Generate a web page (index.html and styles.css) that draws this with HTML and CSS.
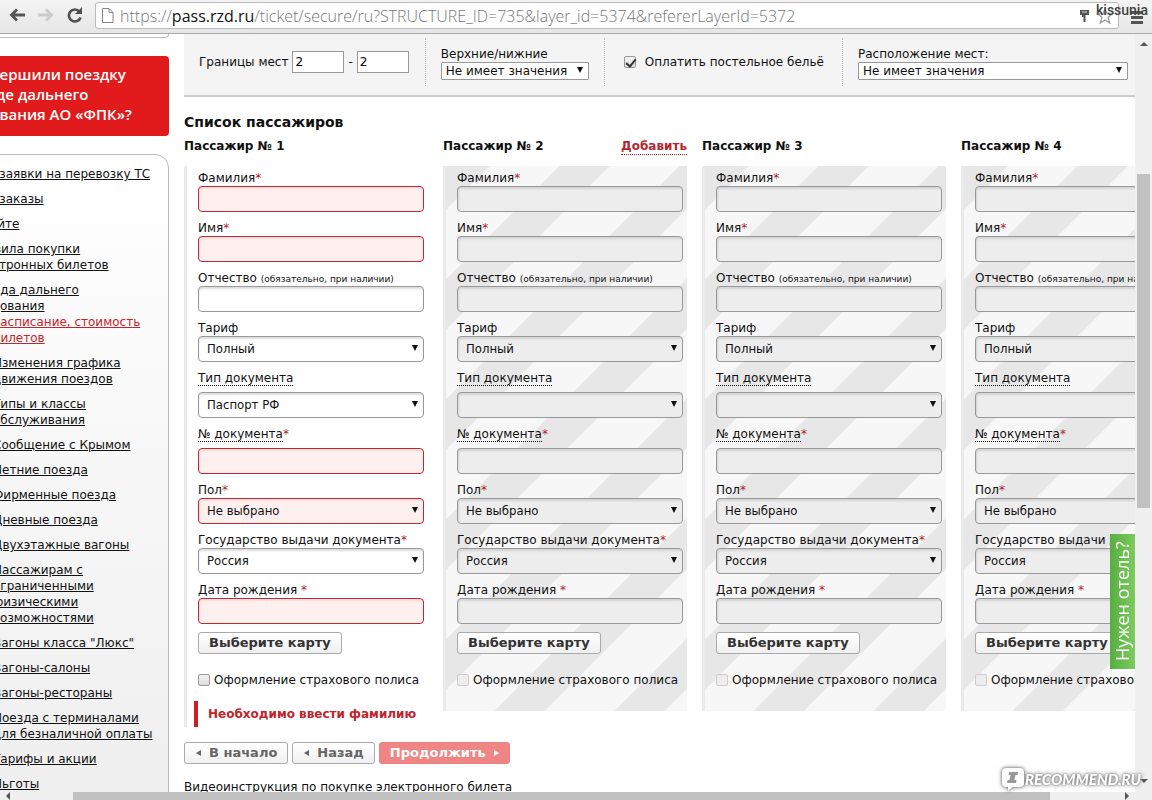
FILE: index.html
```html
<!DOCTYPE html>
<html lang="ru">
<head>
<meta charset="utf-8">
<title>Список пассажиров</title>
<link rel="stylesheet" href="styles.css">
</head>
<body>
<header class="toolbar">
  <button class="tool" type="button" aria-label="Назад"><svg width="18" height="16" viewBox="0 0 18 16"><path d="M17 8H4M9 2.500L3.500 8L9 13.500" fill="none" stroke="#555" stroke-width="2.800"/></svg></button>
  <button class="tool" type="button" aria-label="Вперёд"><svg width="18" height="16" viewBox="0 0 18 16"><path d="M1 8h13M9 2.500L14.500 8L9 13.500" fill="none" stroke="#ccc" stroke-width="2.800"/></svg></button>
  <button class="tool" type="button" aria-label="Обновить"><svg width="18" height="16" viewBox="0 0 18 16"><path d="M13.500 4.500A6 6 0 1 0 14.600 10.500" fill="none" stroke="#505050" stroke-width="2.600"/><path d="M16 0v7H9z" fill="#505050"/></svg></button>
  <div class="address">
    <svg class="doc" width="14" height="18" viewBox="0 0 14 18"><path d="M1.500 1.500h6.500l4 4v10H1.500zM8 1.500v4h4" fill="#fff" stroke="#888"/></svg>
    <div class="url">https://<b>pass.rzd.ru</b>/ticket/secure/ru?STRUCTURE_ID=735&amp;layer_id=5374&amp;refererLayerId=5372</div>
    <svg width="12" height="16" viewBox="0 0 12 16"><path d="M1 2h9v5H1z" fill="#555"/><path d="M3 4h5" stroke="#ddd"/><path d="M5.500 7v7M4 7v2" stroke="#555" stroke-width="2"/></svg>
    <svg class="star" width="18" height="18" viewBox="0 0 18 18"><path d="M9 2l2.100 5H16l-4 3.500 1.800 5.500L9 13l-4.800 3L6 10.500 2 7h4.900z" fill="#fff" stroke="#999" stroke-width="1.200"/></svg>
  </div>
  <button class="menu" type="button" aria-label="Меню"><svg width="14" height="18" viewBox="0 0 14 18"><path d="M1 5.500h12M1 10.500h12M1 15.500h12" stroke="#555" stroke-width="3"/></svg></button>
  <span class="author">kissunia</span>
</header>

<div class="window">
  <div class="viewport">
    <div class="page">
      <aside class="side">
        <div class="stub"></div>
        <a class="banner" href="#"><span>Вы совершили поездку<br>в поезде дальнего<br>&nbsp; следования АО «ФПК»?</span></a>
        <nav class="links">
          <ul>
            <li><a href="#">Мои заявки на перевозку ТС</a></li>
            <li><a href="#">Мои заказы</a></li>
            <li><a href="#">О сайте</a></li>
            <li><a href="#">Правила покупки<br>электронных билетов</a></li>
            <li><a href="#">Поезда дальнего<br>следования</a>
              <ul>
                <li><a class="current" href="#">Расписание, стоимость<br>билетов</a></li>
                <li><a href="#">Изменения графика<br>движения поездов</a></li>
                <li><a href="#">Типы и классы<br>обслуживания</a></li>
                <li><a href="#">Сообщение с Крымом</a></li>
                <li><a href="#">Летние поезда</a></li>
                <li><a href="#">Фирменные поезда</a></li>
                <li><a href="#">Дневные поезда</a></li>
                <li><a href="#">Двухэтажные вагоны</a></li>
                <li><a href="#">Пассажирам с<br>ограниченными<br>физическими<br>возможностями</a></li>
                <li><a href="#">Вагоны класса "Люкс"</a></li>
                <li><a href="#">Вагоны-салоны</a></li>
                <li><a href="#">Вагоны-рестораны</a></li>
                <li><a href="#">Поезда с терминалами<br>для безналичной оплаты</a></li>
                <li><a href="#">Тарифы и акции</a></li>
                <li><a href="#">Льготы</a></li>
              </ul>
            </li>
          </ul>
        </nav>
      </aside>

      <main class="main">
        <section class="filters">
          <div class="filter range">
            <label for="from">Границы мест</label>
            <input id="from" type="text" value="2"><span>-</span><input type="text" value="2" aria-label="Границы мест, до">
          </div>
          <div class="filter stack">
            <label for="level">Верхние/нижние</label>
            <div class="pick small"><select id="level"><option>Не имеет значения</option></select></div>
          </div>
          <div class="filter linen">
            <input id="linen" class="tick" type="checkbox" checked><label for="linen">Оплатить постельное бельё</label>
          </div>
          <div class="filter stack wide">
            <label for="place">Расположение мест:</label>
            <div class="pick small"><select id="place"><option>Не имеет значения</option></select></div>
          </div>
        </section>

        <h1 class="title">Список пассажиров</h1>
        <div class="passengers">
          <section class="passenger">
            <div class="head"><h2>Пассажир № 1</h2></div>
            <div class="card active">
              <div class="field"><label for="s1">Фамилия<i>*</i></label><input class="box bad" id="s1" type="text"></div>
              <div class="field"><label for="n1">Имя<i>*</i></label><input class="box bad" id="n1" type="text"></div>
              <div class="field"><label for="p1">Отчество <small>(обязательно, при наличии)</small></label><input class="box" id="p1" type="text"></div>
              <div class="field"><label for="t1">Тариф</label><div class="pick"><select class="box" id="t1"><option>Полный</option></select></div></div>
              <div class="field hint"><label for="d1"><u>Тип документа</u></label><div class="pick"><select class="box" id="d1"><option>Паспорт РФ</option></select></div></div>
              <div class="field hint"><label for="i1"><u>№ документа</u><i>*</i></label><input class="box bad" id="i1" type="text"></div>
              <div class="field"><label for="g1">Пол<i>*</i></label><div class="pick"><select class="box bad" id="g1"><option>Не выбрано</option></select></div></div>
              <div class="field"><label for="c1">Государство выдачи документа<i>*</i></label><div class="pick"><select class="box" id="c1"><option>Россия</option></select></div></div>
              <div class="field"><label for="b1">Дата рождения <i>*</i></label><input class="box bad" id="b1" type="text"></div>
              <button class="btn" type="button">Выберите карту</button>
              <div class="policy"><input class="tick" id="o1" type="checkbox"><label for="o1">Оформление страхового полиса</label></div>
              <p class="error">Необходимо ввести фамилию</p>
            </div>
          </section>
          <section class="passenger">
            <div class="head"><h2>Пассажир № 2</h2><a class="add" href="#">Добавить</a></div>
            <div class="card">
              <div class="field"><label for="s2">Фамилия<i>*</i></label><input class="box" id="s2" type="text" disabled></div>
              <div class="field"><label for="n2">Имя<i>*</i></label><input class="box" id="n2" type="text" disabled></div>
              <div class="field"><label for="p2">Отчество <small>(обязательно, при наличии)</small></label><input class="box" id="p2" type="text" disabled></div>
              <div class="field"><label for="t2">Тариф</label><div class="pick"><select class="box" id="t2" disabled><option>Полный</option></select></div></div>
              <div class="field hint"><label for="d2"><u>Тип документа</u></label><div class="pick"><select class="box" id="d2" disabled><option></option></select></div></div>
              <div class="field hint"><label for="i2"><u>№ документа</u><i>*</i></label><input class="box" id="i2" type="text" disabled></div>
              <div class="field"><label for="g2">Пол<i>*</i></label><div class="pick"><select class="box" id="g2" disabled><option>Не выбрано</option></select></div></div>
              <div class="field"><label for="c2">Государство выдачи документа<i>*</i></label><div class="pick"><select class="box" id="c2" disabled><option>Россия</option></select></div></div>
              <div class="field"><label for="b2">Дата рождения <i>*</i></label><input class="box" id="b2" type="text" disabled></div>
              <button class="btn" type="button">Выберите карту</button>
              <div class="policy"><input class="tick" id="o2" type="checkbox" disabled><label for="o2">Оформление страхового полиса</label></div>
            </div>
          </section>
          <section class="passenger">
            <div class="head"><h2>Пассажир № 3</h2></div>
            <div class="card">
              <div class="field"><label for="s3">Фамилия<i>*</i></label><input class="box" id="s3" type="text" disabled></div>
              <div class="field"><label for="n3">Имя<i>*</i></label><input class="box" id="n3" type="text" disabled></div>
              <div class="field"><label for="p3">Отчество <small>(обязательно, при наличии)</small></label><input class="box" id="p3" type="text" disabled></div>
              <div class="field"><label for="t3">Тариф</label><div class="pick"><select class="box" id="t3" disabled><option>Полный</option></select></div></div>
              <div class="field hint"><label for="d3"><u>Тип документа</u></label><div class="pick"><select class="box" id="d3" disabled><option></option></select></div></div>
              <div class="field hint"><label for="i3"><u>№ документа</u><i>*</i></label><input class="box" id="i3" type="text" disabled></div>
              <div class="field"><label for="g3">Пол<i>*</i></label><div class="pick"><select class="box" id="g3" disabled><option>Не выбрано</option></select></div></div>
              <div class="field"><label for="c3">Государство выдачи документа<i>*</i></label><div class="pick"><select class="box" id="c3" disabled><option>Россия</option></select></div></div>
              <div class="field"><label for="b3">Дата рождения <i>*</i></label><input class="box" id="b3" type="text" disabled></div>
              <button class="btn" type="button">Выберите карту</button>
              <div class="policy"><input class="tick" id="o3" type="checkbox" disabled><label for="o3">Оформление страхового полиса</label></div>
            </div>
          </section>
          <section class="passenger">
            <div class="head"><h2>Пассажир № 4</h2></div>
            <div class="card">
              <div class="field"><label for="s4">Фамилия<i>*</i></label><input class="box" id="s4" type="text" disabled></div>
              <div class="field"><label for="n4">Имя<i>*</i></label><input class="box" id="n4" type="text" disabled></div>
              <div class="field"><label for="p4">Отчество <small>(обязательно, при наличии)</small></label><input class="box" id="p4" type="text" disabled></div>
              <div class="field"><label for="t4">Тариф</label><div class="pick"><select class="box" id="t4" disabled><option>Полный</option></select></div></div>
              <div class="field hint"><label for="d4"><u>Тип документа</u></label><div class="pick"><select class="box" id="d4" disabled><option></option></select></div></div>
              <div class="field hint"><label for="i4"><u>№ документа</u><i>*</i></label><input class="box" id="i4" type="text" disabled></div>
              <div class="field"><label for="g4">Пол<i>*</i></label><div class="pick"><select class="box" id="g4" disabled><option>Не выбрано</option></select></div></div>
              <div class="field"><label for="c4">Государство выдачи документа<i>*</i></label><div class="pick"><select class="box" id="c4" disabled><option>Россия</option></select></div></div>
              <div class="field"><label for="b4">Дата рождения <i>*</i></label><input class="box" id="b4" type="text" disabled></div>
              <button class="btn" type="button">Выберите карту</button>
              <div class="policy"><input class="tick" id="o4" type="checkbox" disabled><label for="o4">Оформление страхового полиса</label></div>
            </div>
          </section>
        </div>

        <div class="steps">
          <button class="btn step" type="button"><span class="arrow left"></span>В начало</button>
          <button class="btn step" type="button"><span class="arrow left"></span>Назад</button>
          <button class="btn step next" type="button">Продолжить<span class="arrow right"></span></button>
        </div>
        <p class="video">Видеоинструкция по покупке электронного билета</p>
      </main>
    </div>
    <a class="hotel" href="#">Нужен отель?</a>
  </div>
  <div class="vbar"><span class="tip up"></span><span class="vthumb"></span><span class="tip down"></span></div>
</div>
<div class="hbar"><span class="tip back"></span><span class="hthumb"></span><span class="tip forth"></span></div>
<div class="mark">
  <svg width="24" height="26" viewBox="0 0 24 26"><path d="M5 2h14q4 0 4 4v11q0 4-4 4h-7l-5 4v-4H5q-4 0-4-4V6q0-4 4-4z" fill="#fff"/><path d="M8 6h9l-.500 3h-2l-1 5h2l-.500 3H6l.500-3h2l1-5h-2z" fill="#999"/></svg>
  <span>RECOMMEND.RU</span>
</div>
</body>
</html>
```
FILE: styles.css
```css
* { box-sizing: border-box; }

body {
  margin: 0;
  height: 100vh;
  display: flex;
  flex-direction: column;
  overflow: hidden;
  position: relative;
  background: #fff;
  color: #111;
  font: 12px/16px "DejaVu Sans", Verdana, sans-serif;
}

h1, h2, p, ul { margin: 0; padding: 0; }
ul { list-style: none; }
button, input, select { font: inherit; margin: 0; }

/* Browser toolbar */
.toolbar {
  flex: none;
  height: 34px;
  display: flex;
  align-items: flex-start;
  gap: 11px;
  padding: 2px 8px 0;
  background: linear-gradient(#f4f4f4, #e6e6e6);
  border-bottom: 1px solid #aaa;
  position: relative;
}
.tool, .menu {
  flex: none;
  display: flex;
  padding: 5px 0;
  border: 0;
  background: none;
}
.address {
  flex: 1;
  min-width: 0;
  height: 27px;
  display: flex;
  align-items: center;
  gap: 5px;
  padding: 0 4px 0 5px;
  background: #fff;
  border: 1px solid #bbb;
  border-radius: 3px;
}
.address svg { flex: none; }
.url {
  flex: 1;
  overflow: hidden;
  white-space: nowrap;
  color: #777;
  font: 300 16px/24px "Open Sans", "Noto Sans", sans-serif;
}
.url b { color: #111; font-weight: 400; }
.author {
  position: absolute;
  right: 4px;
  top: 2px;
  color: #444;
  font: 500 14px/16px Roboto, sans-serif;
}

/* Scrolled window */
.window { flex: 1; min-height: 0; display: flex; }
.viewport { flex: 1; min-width: 0; overflow: hidden; position: relative; }
.page { display: flex; align-items: flex-start; margin-left: -56px; }

/* Side column */
.side { flex: none; width: 225px; margin-right: 15px; }
.stub {
  height: 4px;
  border: 1px solid #bbb;
  border-top: 0;
  border-radius: 0 0 8px 8px;
}
.banner {
  display: block;
  margin: 18px 0;
  padding: 8px 0 12px 4px;
  background: #e11b1b;
  border-radius: 4px;
  color: #fff;
  text-decoration: none;
  white-space: nowrap;
  font: 600 15px/20px "Open Sans", sans-serif;
}
.links {
  padding: 11px 0 40px 25px;
  border: 1px solid #bbb;
  border-radius: 14px;
  background: linear-gradient(#fff, #eee);
  white-space: nowrap;
}
.links li + li { margin-top: 9px; }
.links ul ul { padding-left: 23px; }
.links a { color: #111; }
.links .current { color: #c8242b; }

/* Filters */
.main { flex: 1; min-width: 0; }
.filters {
  display: flex;
  padding: 4px 7px 9px 0;
  background: #f4f4f4;
  border-bottom: 2px solid #ccc;
}
.filter {
  display: flex;
  align-items: center;
  height: 48px;
  padding: 0 15px;
  white-space: nowrap;
}
.filter + .filter { border-left: 1px dotted #bbb; }
.range { gap: 4px; padding-right: 16px; }
.range input {
  width: 52px;
  height: 22px;
  padding: 0 2px;
  border: 1px solid #999;
  background: #fff;
}
.linen { gap: 9px; padding: 0 18px 0 19px; }
.stack { flex-direction: column; align-items: stretch; justify-content: center; padding-top: 2px; }
.wide { flex: 1; padding-right: 0; }
.pick { position: relative; }
.pick select {
  display: block;
  appearance: none;
  width: 100%;
  color: #111;
  opacity: 1;
  font-family: "DejaVu Sans Condensed", "DejaVu Sans", sans-serif;
  font-size: 13px;
}
.pick::after {
  content: "";
  position: absolute;
  right: 6px;
  top: 50%;
  margin-top: -4px;
  border: 3px solid transparent;
  border-top: 6px solid #111;
  border-bottom: 0;
  pointer-events: none;
}
.pick.small select {
  height: 18px;
  padding: 0 20px 0 4px;
  border: 1px solid #999;
  border-radius: 1px;
  background: #fff;
  font-family: inherit;
  font-size: 12px;
}

/* Passengers */
.title { margin-top: 16px; font-size: 14px; line-height: 18px; }
.passengers {
  display: grid;
  grid-template-columns: repeat(4, 244px);
  gap: 15px;
  align-items: start;
}
.head { display: flex; justify-content: space-between; padding: 7px 0 12px; }
.head h2 { font-size: 12px; line-height: 16px; }
.add {
  margin-bottom: -1px;
  color: #b9242c;
  font-weight: bold;
  line-height: 16px;
  text-decoration: none;
  border-bottom: 1px dotted #b9242c;
}
.card {
  padding: 4px 4px 23px 11px;
  border-left: 3px solid #eaeaea;
  background: linear-gradient(135deg, #e7e7e7 19%, #f7f7f7 20%, #f7f7f7 48%, #e7e7e7 49%, #e7e7e7 69%, #f7f7f7 70%, #f7f7f7 98%, #e7e7e7 99%) -3px 0 / 120px 120px;
}
.active { padding-bottom: 0; background: none; }
.field { margin-bottom: 8px; }
.field label { display: block; white-space: nowrap; }
.field i { color: #b01c28; font-style: normal; }
.field u { text-decoration: none; border-bottom: 1px dotted #111; }
.field small { font-size: 9px; line-height: 9px; }
.hint label { margin-bottom: 6px; }
.box {
  display: block;
  width: 100%;
  height: 26px;
  padding: 0 8px;
  border: 1px solid #999;
  border-radius: 4px;
  background: #fff;
  box-shadow: inset 0 2px 2px #ddd;
}
.box:disabled { background: #ededed; box-shadow: inset 1px 2px 2px #d4d4d4; }
.box.bad { background: #fff0f0; border-color: #c0282f; box-shadow: inset 1px 2px 2px #f0dcdc; }
.btn {
  height: 22px;
  padding: 0 10px;
  border: 1px solid #aaa;
  border-radius: 3px;
  background: linear-gradient(#fff, #f0f0f0);
  color: #333;
  font-size: 13px;
  font-weight: bold;
  line-height: 18px;
}
.card .btn { display: block; }
.policy { display: flex; align-items: center; gap: 4px; margin-top: 18px; white-space: nowrap; }
.tick {
  appearance: none;
  flex: none;
  width: 12px;
  height: 12px;
  border: 1px solid #999;
  border-radius: 2px;
  background: linear-gradient(#f2f2f2, #ddd);
  position: relative;
}
.tick:disabled { border-color: #ccc; background: #ededed; }
.tick:checked::after {
  content: "";
  position: absolute;
  left: 3px;
  top: 0;
  width: 4px;
  height: 8px;
  border: solid #333;
  border-width: 0 2px 2px 0;
  transform: rotate(40deg);
}
.error {
  margin: 13px 0 0 -4px;
  padding: 5px 0 5px 10px;
  border-left: 4px solid #d01c22;
  color: #c0242b;
  font-weight: bold;
}

/* Steps */
.steps { display: flex; gap: 4px; margin-top: 15px; }
.step { display: flex; align-items: center; gap: 8px; padding: 0 10px 0 11px; color: #666; }
.next { padding: 0 10px; border-color: #f08080; background: #f08585; color: #fff; }
.arrow { border: 3px solid transparent; }
.left { border-left: 0; border-right: 5px solid #666; }
.right { border-right: 0; border-left: 5px solid #fff; }
.video { margin-top: 15px; }

.hotel {
  position: absolute;
  right: 0;
  top: 500px;
  width: 25px;
  height: 135px;
  text-align: center;
  writing-mode: vertical-rl;
  transform: rotate(180deg);
  background: linear-gradient(90deg, #7ccb5e, #58ae42);
  color: #fff;
  text-decoration: none;
  font: 18px/25px "Open Sans", sans-serif;
}

/* Scroll bars */
.vbar, .hbar { flex: none; display: flex; background: #f0f0f0; }
.vbar { width: 17px; flex-direction: column; align-items: center; padding: 8px 0 9px; }
.vthumb { width: 13px; height: 334px; margin: 128px 0 auto; background: #c1c1c1; }
.hbar { height: 8px; align-items: center; padding: 0 23px 0 6px; }
.hthumb { width: 87%; height: 8px; margin: 0 auto 0 63px; background: #c0c0c0; }
.tip { border: 4px solid transparent; }
.up { border-top: 0; border-bottom-color: #555; }
.down { border-bottom: 0; border-top-color: #555; }
.back { border-left: 0; border-right-color: #555; }
.forth { border-right: 0; border-left-color: #555; }

.mark {
  position: absolute;
  right: 11px;
  bottom: 8px;
  display: flex;
  align-items: center;
  color: #fff;
  filter: drop-shadow(0 0 1px #777) drop-shadow(0 0 2px #999);
  font: italic 900 15px/20px Lato, sans-serif;
}
```
